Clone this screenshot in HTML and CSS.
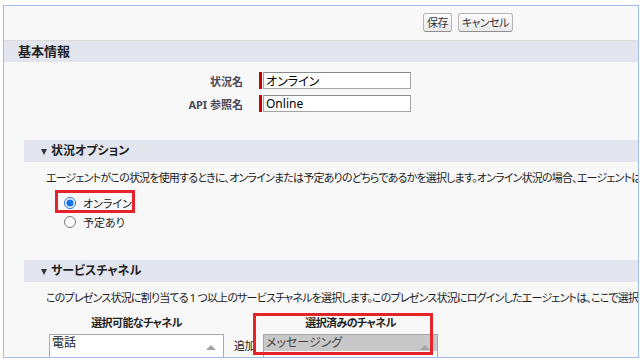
FILE: index.html
```html
<!DOCTYPE html>
<html lang="ja">
<head>
    <meta charset="UTF-8">
    <title>プレゼンス状況の編集</title>
    <link rel="stylesheet" href="styles.css">
</head>
<body>
    <div class="frame">
        <div class="btnbar">
            <button class="btn">保存</button>
            <button class="btn">キャンセル</button>
        </div>
        <h2 class="band">基本情報</h2>
        <div class="fields">
            <div class="field">
                <label class="field-label">状況名</label>
                <span class="req"></span>
                <input class="field-input" type="text" value="オンライン">
            </div>
            <div class="field">
                <label class="field-label">API 参照名</label>
                <span class="req"></span>
                <input class="field-input" type="text" value="Online">
            </div>
        </div>

        <div class="section sec-options">
            <h3 class="subband"><span class="twist"></span>状況オプション</h3>
            <p class="desc">エージェントがこの状況を使用するときに、オンラインまたは予定ありのどちらであるかを選択します。オンライン状況の場合、エージェントは作業を受信できます。</p>
            <div class="radios">
                <label class="radio marked"><input type="radio" name="status" checked> オンライン</label>
                <label class="radio"><input type="radio" name="status"> 予定あり</label>
            </div>
        </div>

        <div class="section sec-channels">
            <h3 class="subband"><span class="twist"></span>サービスチャネル</h3>
            <p class="desc">このプレゼンス状況に割り当てる 1 つ以上のサービスチャネルを選択します。このプレゼンス状況にログインしたエージェントは、ここで選択されたチャネルの作業を受信できます。</p>
            <div class="duel">
                <div class="duel-col">
                    <div class="duel-head">選択可能なチャネル</div>
                    <div class="listbox">
                        <div class="opt">電話</div>
                        <span class="scroll-up"></span>
                    </div>
                </div>
                <div class="duel-mid">
                    <div class="mid-label">追加</div>
                    <button class="arrow-btn">▶</button>
                </div>
                <div class="duel-col marked-col">
                    <div class="duel-head">選択済みのチャネル</div>
                    <div class="listbox">
                        <div class="opt selected">メッセージング</div>
                        <span class="scroll-up"></span>
                    </div>
                </div>
            </div>
        </div>
    </div>
</body>
</html>
```

FILE: styles.css
```css
body {
    margin: 0;
    background: #fff;
    font-family: "Noto Sans", "Noto Sans CJK JP", sans-serif;
    font-feature-settings: "palt";
    color: #222;
    overflow: hidden;
}
.frame {
    margin: 5px 0 0 3px;
    width: 636px;
    height: 353px;
    box-sizing: border-box;
    border: 1px solid #a3bde9;
    background: #f8f8f8;
    overflow: hidden;
}
.btnbar {
    height: 35px;
    box-sizing: border-box;
    padding: 7px 0 0 419px;
    border-bottom: 1px solid #dcdcdc;
    display: flex;
    gap: 6px;
    align-items: flex-start;
}
.btn {
    height: 19px;
    padding: 0 3px;
    font-family: inherit;
    font-feature-settings: "palt";
    font-size: 11px;
    line-height: 15px;
    letter-spacing: -0.6px;
    color: #333;
    background: linear-gradient(#fdfdfd, #e9e9e9);
    border: 1px solid #b5b5b5;
    border-bottom-color: #8f8f8f;
    border-radius: 3px;
}
.band {
    margin: 0;
    height: 21px;
    line-height: 21px;
    padding-left: 14px;
    background: #e2e5ee;
    font-size: 13px;
    font-weight: bold;
    color: #222;
}
.fields {
    padding-top: 10px;
    display: flex;
    flex-direction: column;
    gap: 6px;
}
.field {
    display: flex;
    align-items: center;
    height: 17px;
}
.field-label {
    width: 239px;
    text-align: right;
    font-size: 11px;
    font-weight: bold;
    color: #4a4a56;
    margin-right: 16px;
}
.req {
    width: 3px;
    height: 17px;
    background: #c00;
    margin-right: 1px;
}
.field-input {
    width: 148px;
    height: 17px;
    box-sizing: border-box;
    margin: 0;
    padding: 0 2px;
    border: 1px solid #a5a5a5;
    border-top-color: #8a8a8a;
    background: #fff;
    font-family: inherit;
    font-feature-settings: "palt";
    font-size: 12px;
    color: #000;
}
.section {
    margin-left: 20px;
}
.sec-options {
    margin-top: 28px;
}
.sec-channels {
    margin-top: 29px;
}
.subband {
    margin: 0;
    height: 22px;
    line-height: 22px;
    padding-left: 17px;
    background: #e2e5ee;
    font-size: 12px;
    font-weight: bold;
    color: #222;
    display: flex;
    align-items: center;
}
.twist {
    width: 0;
    height: 0;
    border-left: 3.5px solid transparent;
    border-right: 3.5px solid transparent;
    border-top: 6px solid #333;
    margin: 2px 4px 0 0;
}
.desc {
    margin: 8px 0 0 22px;
    font-size: 11px;
    line-height: 16px;
    letter-spacing: -0.8px;
    white-space: nowrap;
    color: #222;
}
.radios {
    display: flex;
    flex-direction: column;
    margin: 7px 0 0 40px;
}
.radio {
    position: relative;
    display: flex;
    align-items: center;
    height: 19px;
    font-size: 11px;
    color: #222;
}
.radio input {
    width: 12px;
    height: 12px;
    margin: 0 7px 0 0;
    accent-color: #1473e6;
}
.radio.marked::after {
    content: "";
    position: absolute;
    left: -9px;
    top: -3px;
    width: 80px;
    height: 23px;
    box-sizing: border-box;
    border: 3px solid #e4232b;
}
.duel {
    display: flex;
    margin: 9px 0 0 25px;
}
.duel-col {
    width: 175px;
    position: relative;
}
.duel-head {
    text-align: center;
    font-size: 11px;
    font-weight: bold;
    line-height: 16px;
    letter-spacing: -0.6px;
    height: 19px;
    color: #222;
}
.listbox {
    position: relative;
    height: 60px;
    border: 1px solid #a9a9a9;
    background: #fff;
}
.opt {
    height: 16px;
    line-height: 16px;
    padding-left: 2px;
    font-size: 12px;
    color: #222;
}
.opt.selected {
    background: #c8c8c8;
    color: #444;
}
.scroll-up {
    position: absolute;
    right: 7px;
    top: 10px;
    width: 0;
    height: 0;
    border-left: 5px solid transparent;
    border-right: 5px solid transparent;
    border-bottom: 5px solid #a3a3a3;
}
.duel-mid {
    width: 39px;
    padding: 24px 0 0 10px;
    box-sizing: border-box;
}
.mid-label {
    font-size: 11px;
    line-height: 14px;
    letter-spacing: -0.5px;
    color: #222;
}
.arrow-btn {
    width: 20px;
    height: 16px;
    margin-top: 1px;
    padding: 0;
    font-size: 8px;
    color: #333;
    background: linear-gradient(#fdfdfd, #ebebeb);
    border: 1px solid #a9a9a9;
    border-radius: 2px;
}
.marked-col::after {
    content: "";
    position: absolute;
    left: -10px;
    top: -2px;
    width: 180px;
    height: 42px;
    box-sizing: border-box;
    border: 3px solid #e4232b;
}
```
